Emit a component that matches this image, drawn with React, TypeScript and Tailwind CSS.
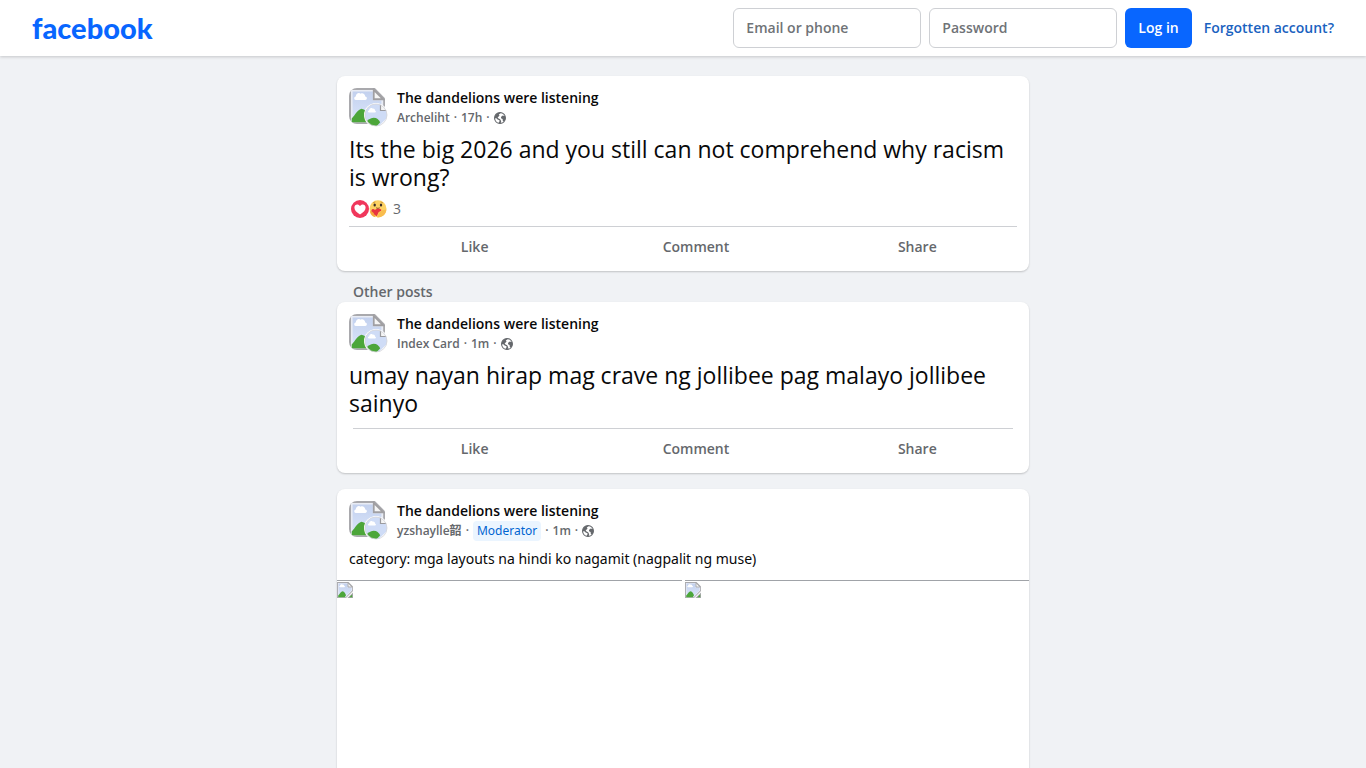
import { useId, type ReactNode } from "react";

type Post = {
  group: string;
  author: string;
  time: string;
  text: string;
  moderator?: boolean;
  large?: boolean;
  reactions?: number;
  images?: string[];
};

const FEATURED: Post = {
  group: "The dandelions were listening",
  author: "Archeliht",
  time: "17h",
  text: "Its the big 2026 and you still can not comprehend why racism is wrong?",
  large: true,
  reactions: 3,
};

const OTHER_POSTS: Post[] = [
  {
    group: "The dandelions were listening",
    author: "Index Card",
    time: "1m",
    text: "umay nayan hirap mag crave ng jollibee pag malayo jollibee sainyo",
    large: true,
  },
  {
    group: "The dandelions were listening",
    author: "yzshaylle韶",
    time: "1m",
    text: "category: mga layouts na hindi ko nagamit (nagpalit ng muse)",
    moderator: true,
    images: ["left", "right"],
  },
];

function BrokenImage({ className }: { className?: string }) {
  const id = useId();
  return (
    <svg viewBox="0 0 16 16" className={className} aria-hidden>
      <defs>
        <linearGradient id={id} x1="0" y1="0" x2="0" y2="1">
          <stop offset="0" stopColor="#c3d1ee" />
          <stop offset="1" stopColor="#dbe6fb" />
        </linearGradient>
      </defs>
      <path d="M0 0h11.5L16 4.5V9L9 16H0z" fill="#a9a9ad" />
      <path d="M.9.9h10.2v4.2h4.1v3.5L8.7 15.2H.9z" fill="#e9ecf4" />
      <path d="M1.6 1.6h9v3.9h3.8v2.9L8 15H1.6z" fill={`url(#${id})`} />
      <path d="M3 5.3c-.8 0-1-1.3 0-1.5.1-1.3 1.2-1.9 2.2-1.3 1-.4 2 .3 2 1.3 1 .1 1 1.5 0 1.5z" fill="#fff" />
      <path d="M1.2 15.2v-1.6C2.8 11.8 4 9.4 5.6 9.2c1.8.3 2.8 2.2 3.4 4L7.8 15.2z" fill="#4ca63a" />
      <path d="M11 .8l4.2 4.2H11z" fill="#f5f5f5" stroke="#a09fa2" strokeWidth=".8" />
      <path d="M16 10.4V16h-5.6z" fill="#a9a9ad" />
      <path d="M15.2 12.4v2.8h-2.8z" fill="#4ca63a" />
    </svg>
  );
}

// Small round picture that sits over the corner of the group picture
function BrokenAvatar({ className }: { className?: string }) {
  const clip = useId();
  return (
    <svg viewBox="0 0 24 24" className={className} aria-hidden>
      <clipPath id={clip}>
        <circle cx="12" cy="12" r="11" />
      </clipPath>
      <circle cx="12" cy="12" r="12" fill="#fff" />
      <g clipPath={`url(#${clip})`}>
        <path d="M0 0h17l7 7v7L14 24H0z" fill="#cfdcf6" />
        <path d="M5 9.4c-1.4 0-1.4-2 .2-2.2.3-2 2-2.6 3.3-1.6 1.4-.4 2.6.6 2.5 1.8 1.3.2 1.2 2 0 2z" fill="#fff" />
        <path d="M1 24v-4c3-3 5.4-5.2 8.6-5.2 3.4 0 5.2 2 6.6 4.4L12 24z" fill="#4ca63a" />
        <path d="M16.5 1v6.5H24" fill="#f5f5f5" stroke="#9b9b9f" strokeWidth="1.2" />
        <path d="M24 14.5V24H14z" fill="#fff" />
        <path d="M24 17.6V24h-7z" fill="#b9dcae" />
      </g>
      <circle cx="12" cy="12" r="11" fill="none" stroke="#d4d4d8" strokeWidth=".8" />
    </svg>
  );
}

function Globe() {
  return (
    <svg viewBox="0 0 16 16" className="size-3 shrink-0" role="img" aria-label="Public">
      <circle cx="8" cy="8" r="7.2" fill="#65686c" stroke="#65686c" strokeWidth="1.6" />
      <path
        d="M1.4 8.2l2.4.5 1.3 1.5 2 .5.3 1.6-1.2 2C3.6 13.6 1.5 11.2 1.4 8.2z"
        fill="#fff"
      />
      <path d="M6.3 3.2l2.6-1.6c2.6.3 4.4 1.8 5.2 3.6l-2.4-.4-2.2 1.4-.2 2 2.2 1.1.2 2.4 1.1.8c-1.2 1-2.4 1.7-3.8 1.9l.6-2.2-1.4-2.4-2.6-1.4-.8-1.7 1.7-.8.8-1.6z" fill="#fff" />
    </svg>
  );
}

function LoveIcon() {
  return (
    <svg viewBox="0 0 18 18" className="size-[18px]" role="img" aria-label="Love">
      <circle cx="9" cy="9" r="9" fill="#f0375c" />
      <path
        d="M9 14.4C5.4 12.2 3.4 10 3.4 7.4c0-3.3 4-4.1 5.6-1.3 1.6-2.8 5.6-2 5.6 1.3 0 2.6-2 4.8-5.6 7z"
        fill="#fff"
      />
    </svg>
  );
}

function CareIcon() {
  return (
    <svg viewBox="0 0 18 18" className="size-[18px]" role="img" aria-label="Care">
      <circle cx="9" cy="8.8" r="8.5" fill="#fdd264" />
      <path d="M4 2.9l2.4-1M11.5 1.9l2.5 1" stroke="#c58a2b" strokeWidth=".8" />
      <ellipse cx="5.7" cy="5" rx="1.2" ry="1.5" fill="#3a2d28" />
      <ellipse cx="12" cy="5" rx="1.2" ry="1.5" fill="#3a2d28" />
      <path d="M7.2 7.8c1 .7 2.4.7 3.4 0" fill="none" stroke="#6b3a1e" strokeWidth=".9" />
      <path d="M7.8 16.3C4.8 14.5 2 13 2.4 10.6c.4-2 2.6-2 3.5-.5 1.4-1.7 5.8-2 6.5 0 .1 1.4-2.2 1.4-2.8 2.2z" fill="#e8353f" />
      <path d="M1 11.2c1.8-.2 3.2.9 4 2.5l1.4 3.6C3 16.6 1 14 1 11.2z" fill="#f6a63b" />
      <path d="M17.4 9.6c-1.6.4-4.2.4-5.5 1.4-1.7 1.3-2.6 2.6-3.8 6.4 5 .6 9-2.8 9.3-7.8z" fill="#f9bd4e" />
    </svg>
  );
}

function Header() {
  const field =
    "h-10 w-[188px] rounded-md border border-[#ced0d4] bg-white px-3 pb-0.5 text-sm font-semibold text-[#080809] outline-none placeholder:text-[#707377]";
  return (
    <header className="sticky top-0 z-10 flex h-14 items-center justify-between bg-white px-8 shadow-[0_1px_3px_rgba(0,0,0,0.18)]">
      <a href="#home" className="font-[Lato,sans-serif] text-[29px] leading-8 font-black text-[#0866ff]">
        facebook
      </a>
      <form className="flex items-center gap-2" onSubmit={(e) => e.preventDefault()}>
        <input className={field} type="text" placeholder="Email or phone" aria-label="Email or phone" />
        <input className={field} type="password" placeholder="Password" aria-label="Password" />
        <button type="submit" className="h-10 rounded-md bg-[#0866ff] px-[13px] text-sm font-semibold text-white">
          Log in
        </button>
        <a href="#recover" className="ml-1 text-sm font-semibold text-[#1a62c0]">
          Forgotten account?
        </a>
      </form>
    </header>
  );
}

function Avatar() {
  return (
    <div className="relative size-9 shrink-0">
      <BrokenImage className="size-9 rounded-lg" />
      <BrokenAvatar className="absolute top-[15px] left-[15px] size-6" />
    </div>
  );
}

function PostHeader({ post }: { post: Post }) {
  return (
    <div className="flex gap-3">
      <Avatar />
      <div className="min-w-0">
        <h3 className="text-sm leading-5 font-semibold text-[#080809]">
          <a href="#group">{post.group}</a>
        </h3>
        <div className="flex h-5 items-center gap-1 text-xs font-semibold text-[#65686c]">
          <a href="#author">{post.author}</a>
          <span>·</span>
          {post.moderator && (
            <>
              <span className="rounded bg-[#ebf5ff] px-1 font-['Noto_Sans',sans-serif] leading-5 font-normal text-[#0064d1]">
                Moderator
              </span>
              <span>·</span>
            </>
          )}
          <a href="#time">{post.time}</a>
          <span>·</span>
          <Globe />
        </div>
      </div>
    </div>
  );
}

function Actions() {
  return (
    <div className="mr-3 ml-4 grid grid-cols-3 pt-1 pb-2">
      {["Like", "Comment", "Share"].map((label) => (
        <button key={label} type="button" className="h-8 pl-[22px] text-sm font-semibold text-[#65686c]">
          {label}
        </button>
      ))}
    </div>
  );
}

function Card({ children }: { children: ReactNode }) {
  return (
    <article className="overflow-hidden rounded-lg bg-white shadow-[0_1px_2px_rgba(0,0,0,0.2)]">{children}</article>
  );
}

function PostCard({ post }: { post: Post }) {
  return (
    <Card>
      <div className="px-3 pt-3">
        <PostHeader post={post} />
        {post.large ? (
          <p className="mt-[7px] pb-px text-[23px] leading-7 text-[#080809]">{post.text}</p>
        ) : (
          <p className="mt-2 pb-[11px] font-['Noto_Sans',sans-serif] text-sm leading-5 text-[#080809]">{post.text}</p>
        )}
      </div>
      {post.images ? (
        <div className="grid grid-cols-2 gap-[3px]">
          {post.images.map((name) => (
            <a key={name} href="#photo" aria-label="Photo" className="block aspect-3/4 border-t border-[#a0a3a8] pt-px">
              <BrokenImage className="size-4" />
            </a>
          ))}
        </div>
      ) : post.reactions ? (
        <div className="mx-3 flex h-[35px] items-center border-b border-[#ced0d4] pl-0.5">
          <LoveIcon />
          <CareIcon />
          <span className="ml-1.5 text-sm text-[#65686c]">{post.reactions}</span>
        </div>
      ) : (
        <div className="mx-4 mt-[10px] border-t border-[#ced0d4]" />
      )}
      <Actions />
    </Card>
  );
}

export default function App() {
  return (
    <div className="min-h-screen bg-[#f0f2f5] font-['Open_Sans','Noto_Sans_CJK_SC',sans-serif]">
      <Header />
      <main className="mx-auto w-full max-w-[692px] pt-5">
        <PostCard post={FEATURED} />
        <h2 className="mt-[11px] px-4 text-sm leading-5 font-semibold text-[#65686c]">Other posts</h2>
        <div className="flex flex-col gap-4">
          {OTHER_POSTS.map((post) => (
            <PostCard key={post.author} post={post} />
          ))}
        </div>
      </main>
    </div>
  );
}
